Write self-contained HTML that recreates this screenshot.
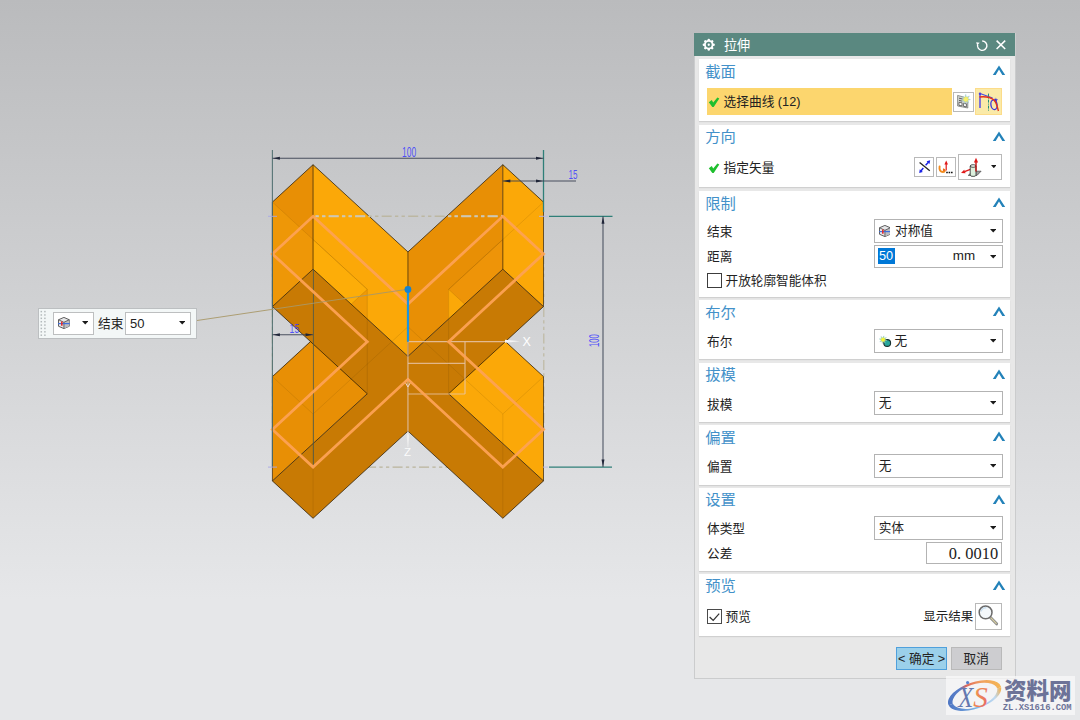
<!DOCTYPE html>
<html lang="zh-CN">
<head>
<meta charset="utf-8">
<title>拉伸</title>
<style>
html,body{margin:0;padding:0;}
body{width:1080px;height:720px;overflow:hidden;position:relative;
  font-family:"Liberation Sans","Noto Sans CJK SC",sans-serif;
  background:linear-gradient(180deg,#babbbd 0px,#e6e7e9 600px,#e6e7e9 720px);}
#scene{position:absolute;left:0;top:0;}
div{box-sizing:content-box;}
</style>
</head>
<body>
<svg id="scene" width="1080" height="720" viewBox="0 0 1080 720">
<defs><clipPath id="clipTopDash"><polygon points="272.4,202.09 313.06,164.7 313.06,269.2 272.4,306.56"/><polygon points="313.06,164.7 407.95,251.95 407.95,356.38 313.06,269.2"/><polygon points="407.95,251.95 502.83,164.7 502.83,269.2 407.95,356.38"/><polygon points="502.83,164.7 543.5,202.09 543.5,306.56 502.83,269.2"/></clipPath></defs>
<line x1="313.065" y1="467.1" x2="502.835" y2="467.1" stroke="#b9b49c" stroke-width="1.4" stroke-dasharray="10 3.3 3.3 3.3 3.3 3.3"/>
<line x1="272.4" y1="253.92" x2="272.4" y2="429.48" stroke="#bdb8a2" stroke-width="1.2" stroke-dasharray="10 3.3 3.3 3.3 3.3 3.3"/>
<line x1="543.8" y1="253.92" x2="543.8" y2="429.48" stroke="#bdb8a2" stroke-width="1.2" stroke-dasharray="10 3.3 3.3 3.3 3.3 3.3"/>
<g shape-rendering="geometricPrecision">
<polygon points="272.4,376.61 367.28,289.35 367.28,393.75 272.4,480.94" fill="#E88F05"/>
<polygon points="448.62,289.35 543.5,376.61 543.5,480.94 448.62,393.75" fill="#FBA808"/>
<polygon points="272.4,202.09 313.06,164.7 313.06,269.2 272.4,306.56" fill="#E88F05"/>
<polygon points="313.06,164.7 407.95,251.95 407.95,356.38 313.06,269.2" fill="#FBA808"/>
<polygon points="407.95,251.95 502.83,164.7 502.83,269.2 407.95,356.38" fill="#E88F05"/>
<polygon points="502.83,164.7 543.5,202.09 543.5,306.56 502.83,269.2" fill="#FBA808"/>
<polygon points="313.06,269.2 407.95,356.38 502.83,269.2 543.5,306.56 448.62,393.75 543.5,480.94 502.83,518.3 407.95,431.12 313.06,518.3 272.4,480.94 367.28,393.75 272.4,306.56" fill="#C87A04"/>
<polygon points="448.62,289.35 464.753,304.187 448.62,319.011" fill="#FBA808"/>
<polygon points="448.62,289.35 502.83,239.494 502.83,269.2 448.62,319.011" fill="#EE9408" />
<polygon points="448.62,289.35 464.753,304.187 448.62,319.011" fill="#FBA808"/>
<polygon points="367.28,289.35 313.06,239.485 313.06,269.2 367.28,319.015" fill="#FDAD08" />
<polygon points="367.28,289.35 351.144,304.19 367.28,319.015" fill="#F09A06"/>
<polygon points="272.4,202.09 313.06,239.485 313.06,269.2 272.4,306.56" fill="#EE9707"/>
<line x1="272.4" y1="202.09" x2="313.06" y2="164.7" stroke="#2a1c05" stroke-width="0.9" stroke-opacity="0.85" />
<line x1="313.06" y1="164.7" x2="407.95" y2="251.95" stroke="#2a1c05" stroke-width="0.9" stroke-opacity="0.85" />
<line x1="407.95" y1="251.95" x2="502.83" y2="164.7" stroke="#2a1c05" stroke-width="0.9" stroke-opacity="0.85" />
<line x1="502.83" y1="164.7" x2="543.5" y2="202.09" stroke="#2a1c05" stroke-width="0.9" stroke-opacity="0.85" />
<line x1="272.4" y1="376.61" x2="310.499" y2="341.571" stroke="#2a1c05" stroke-width="0.9" stroke-opacity="0.85" />
<line x1="543.5" y1="376.61" x2="505.401" y2="341.571" stroke="#2a1c05" stroke-width="0.9" stroke-opacity="0.85" />
<line x1="272.4" y1="202.09" x2="272.4" y2="306.56" stroke="#2a1c05" stroke-width="0.9" stroke-opacity="0.75" />
<line x1="313.06" y1="164.7" x2="313.06" y2="269.2" stroke="#2a1c05" stroke-width="0.9" stroke-opacity="0.75" />
<line x1="407.95" y1="251.95" x2="407.95" y2="356.38" stroke="#2a1c05" stroke-width="0.9" stroke-opacity="0.75" />
<line x1="502.83" y1="164.7" x2="502.83" y2="269.2" stroke="#2a1c05" stroke-width="0.9" stroke-opacity="0.75" />
<line x1="543.5" y1="202.09" x2="543.5" y2="306.56" stroke="#2a1c05" stroke-width="0.9" stroke-opacity="0.75" />
<line x1="272.4" y1="376.61" x2="272.4" y2="480.94" stroke="#2a1c05" stroke-width="0.9" stroke-opacity="0.75" />
<line x1="543.5" y1="376.61" x2="543.5" y2="480.94" stroke="#2a1c05" stroke-width="0.9" stroke-opacity="0.75" />
<polygon points="313.06,269.2 407.95,356.38 502.83,269.2 543.5,306.56 448.62,393.75 543.5,480.94 502.83,518.3 407.95,431.12 313.06,518.3 272.4,480.94 367.28,393.75 272.4,306.56" fill="none" stroke="#2a1c05" stroke-width="0.9" stroke-opacity="0.85" stroke-linejoin="round"/>
<line x1="367.28" y1="289.35" x2="367.28" y2="393.75" stroke="#5a3a00" stroke-width="0.7" stroke-opacity="0.22" />
<line x1="448.62" y1="289.35" x2="448.62" y2="393.75" stroke="#5a3a00" stroke-width="0.7" stroke-opacity="0.22" />
<line x1="448.62" y1="289.35" x2="502.83" y2="239.494" stroke="#5a3a00" stroke-width="0.7" stroke-opacity="0.22" />
<line x1="367.28" y1="289.35" x2="313.06" y2="239.485" stroke="#5a3a00" stroke-width="0.7" stroke-opacity="0.22" />
<line x1="448.62" y1="289.35" x2="464.753" y2="304.187" stroke="#5a3a00" stroke-width="0.7" stroke-opacity="0.22" />
<line x1="367.28" y1="289.35" x2="351.144" y2="304.19" stroke="#5a3a00" stroke-width="0.7" stroke-opacity="0.22" />
<line x1="272.4" y1="376.61" x2="313.06" y2="414" stroke="#5a3a00" stroke-width="0.7" stroke-opacity="0.2" />
<line x1="313.06" y1="414" x2="407.95" y2="326.75" stroke="#5a3a00" stroke-width="0.7" stroke-opacity="0.2" />
<line x1="407.95" y1="326.75" x2="502.83" y2="414" stroke="#5a3a00" stroke-width="0.7" stroke-opacity="0.2" />
<line x1="502.83" y1="414" x2="543.5" y2="376.61" stroke="#5a3a00" stroke-width="0.7" stroke-opacity="0.2" />
<line x1="313.06" y1="414" x2="313.06" y2="518.3" stroke="#5a3a00" stroke-width="0.7" stroke-opacity="0.18" />
<line x1="502.83" y1="414" x2="502.83" y2="518.3" stroke="#5a3a00" stroke-width="0.7" stroke-opacity="0.18" />
<line x1="407.95" y1="326.75" x2="407.95" y2="431.12" stroke="#5a3a00" stroke-width="0.7" stroke-opacity="0.18" />
<line x1="272.4" y1="202.09" x2="367.28" y2="289.35" stroke="#5a3a00" stroke-width="0.7" stroke-opacity="0.18" />
<line x1="543.5" y1="202.09" x2="448.62" y2="289.35" stroke="#5a3a00" stroke-width="0.7" stroke-opacity="0.18" />
</g>
<line x1="313.065" y1="216.3" x2="502.835" y2="216.3" stroke="#bcb7a2" stroke-width="1.6" stroke-opacity="1" stroke-dasharray="10 3.3 3.3 3.3 3.3 3.3" stroke-dashoffset="10.9"/>
<g clip-path="url(#clipTopDash)">
<line x1="313.065" y1="216.3" x2="502.835" y2="216.3" stroke="#d0c8b2" stroke-width="2" stroke-opacity="1" stroke-dasharray="10 3.3 3.3 3.3 3.3 3.3" stroke-dashoffset="10.9"/>
</g>
<line x1="407.95" y1="341.7" x2="505" y2="341.7" stroke="#e8c6aa" stroke-width="1.2" stroke-opacity="0.85" />
<line x1="407.95" y1="341.7" x2="407.95" y2="432" stroke="#e8c6aa" stroke-width="1.2" stroke-opacity="0.85" />
<line x1="465" y1="341.7" x2="465" y2="394" stroke="#e8c6aa" stroke-width="1.2" stroke-opacity="0.8" />
<line x1="407.95" y1="363.3" x2="465" y2="363.3" stroke="#e8c6aa" stroke-width="1.2" stroke-opacity="0.8" />
<line x1="407.95" y1="394" x2="465" y2="394" stroke="#e8c6aa" stroke-width="1.2" stroke-opacity="0.8" />
<polygon points="505,339.8 520,341.3 505,342.8" fill="#f4f4f4"/>
<polygon points="406.7,436 407.9,432 409.2,436 408.3,447 407.6,447" fill="#f0f0f0" fill-opacity="0.9"/>
<text x="522.5" y="346.3" font-family="Liberation Sans, sans-serif" font-size="12.5" fill="#ffffff">X</text>
<text x="404" y="456" font-family="Liberation Sans, sans-serif" font-size="11.5" fill="#ffffff" fill-opacity="0.9">Z</text>
<path d="M405.3 381.5 L407.9 378.4 L410.5 381.5 M405.3 382.5 L407.9 387 L410.5 382.5" fill="none" stroke="#f1d9cf" stroke-width="1"/>
<line x1="313.415" y1="269.2" x2="313.415" y2="467.1" stroke="#3d5557" stroke-width="1" stroke-opacity="0.75" />
<polygon points="313.06,216.3 407.95,304.08 502.83,216.3 543.5,253.92 448.62,341.7 543.5,429.48 502.83,467.1 407.95,379.32 313.06,467.1 272.4,429.48 367.28,341.7 272.4,253.92" fill="none" stroke="#FDA254" stroke-width="2.8" stroke-linejoin="miter" stroke-opacity="0.95"/>
<line x1="272.4" y1="150" x2="272.4" y2="467.1" stroke="#4a6a6c" stroke-width="1.1" stroke-opacity="0.9" />
<line x1="543.5" y1="150" x2="543.5" y2="212" stroke="#2f7f78" stroke-width="1.3" stroke-opacity="1" />
<line x1="549" y1="216.3" x2="612.5" y2="216.3" stroke="#2f7f78" stroke-width="1.3" stroke-opacity="1" />
<line x1="549" y1="467.1" x2="612" y2="467.1" stroke="#2f7f78" stroke-width="1.3" stroke-opacity="1" />
<line x1="268" y1="216.3" x2="277" y2="216.3" stroke="#a9a8e6" stroke-width="1" stroke-opacity="0.9" />
<line x1="539" y1="216.3" x2="548" y2="216.3" stroke="#b9b8e8" stroke-width="1" stroke-opacity="0.9" />
<line x1="268" y1="467.1" x2="277" y2="467.1" stroke="#a9a8e6" stroke-width="1" stroke-opacity="0.9" />
<line x1="543" y1="467.1" x2="548" y2="467.1" stroke="#b9b8e8" stroke-width="1" stroke-opacity="0.9" />
<line x1="272.4" y1="158.3" x2="543.5" y2="158.3" stroke="#3a4152" stroke-width="1.1" stroke-opacity="0.9" />
<polygon points="272.9,158.3 279.9,156.8 279.9,159.8" fill="#1f2538"/>
<polygon points="543,158.3 536,156.8 536,159.8" fill="#1f2538"/>
<line x1="502.835" y1="181" x2="576" y2="181" stroke="#3a4152" stroke-width="1.1" stroke-opacity="0.9" />
<polygon points="503.335,181 510.335,179.5 510.335,182.5" fill="#1f2538"/>
<polygon points="543,181 536,179.5 536,182.5" fill="#1f2538"/>
<line x1="272.4" y1="334.7" x2="313.065" y2="334.7" stroke="#3a4152" stroke-width="1.1" stroke-opacity="0.9" />
<polygon points="272.9,334.7 279.9,333.2 279.9,336.2" fill="#1f2538"/>
<polygon points="312.565,334.7 305.565,333.2 305.565,336.2" fill="#1f2538"/>
<line x1="603" y1="216.3" x2="603" y2="467.1" stroke="#3a4152" stroke-width="1.2" stroke-opacity="0.8" />
<polygon points="603,216.8 601.5,223.8 604.5,223.8" fill="#1f2538"/>
<polygon points="603,466.6 601.5,459.6 604.5,459.6" fill="#1f2538"/>
<text x="402" y="156.8" font-size="14.2" textLength="14.2" lengthAdjust="spacingAndGlyphs" font-family="Liberation Sans, sans-serif" fill="#3a3aff" fill-opacity="0.85">100</text>
<text x="568.6" y="178.8" font-size="13" textLength="9" lengthAdjust="spacingAndGlyphs" font-family="Liberation Sans, sans-serif" fill="#3a3aff" fill-opacity="0.85">15</text>
<text x="289.6" y="332.6" font-size="13" textLength="9.6" lengthAdjust="spacingAndGlyphs" font-family="Liberation Sans, sans-serif" fill="#3a3aff" fill-opacity="0.85">15</text>
<text transform="translate(598.6,347) rotate(-90)" font-size="15" textLength="12.8" lengthAdjust="spacingAndGlyphs" font-family="Liberation Sans, sans-serif" fill="#3a3aff" fill-opacity="0.85">100</text>
<line x1="197" y1="320.5" x2="407.95" y2="289.2" stroke="#a89868" stroke-width="1" stroke-opacity="0.9" />
<line x1="407.95" y1="291" x2="407.95" y2="341.7" stroke="#1d95dd" stroke-width="2.2" stroke-opacity="1" />
<circle cx="407.95" cy="289.4" r="3.4" fill="#1583d2"/>
</svg>
<div style="position:absolute;left:694px;top:33px;width:319.5px;height:645px;background:#e8e8e8;border:1px solid #cbcccd;border-top:none;"></div>
<div style="position:absolute;left:694px;top:33px;width:321px;height:22.5px;background:#5a8880;"></div>
<svg style="position:absolute;left:702px;top:38px" width="13.5" height="13.5" viewBox="0 0 13.5 13.5"><g stroke="#fff" stroke-width="2.5" stroke-linecap="round"><line x1="6.75" y1="1.9" x2="6.75" y2="11.6"/><line x1="1.9" y1="6.75" x2="11.6" y2="6.75"/><line x1="3.3" y1="3.3" x2="10.2" y2="10.2"/><line x1="10.2" y1="3.3" x2="3.3" y2="10.2"/></g><circle cx="6.75" cy="6.75" r="4.7" fill="#fff"/><circle cx="6.75" cy="6.75" r="2.9" fill="#5a8880"/><circle cx="6.75" cy="6.75" r="1.15" fill="#fff"/></svg>
<div style="position:absolute;left:724px;top:35px;font-size:13.1px;line-height:22px;color:#fff;white-space:nowrap;">拉伸</div>
<svg style="position:absolute;left:975.5px;top:38.5px" width="13" height="13" viewBox="0 0 13 13"><path d="M6.20 2.00 A4.7 4.7 0 1 1 1.66 5.48" fill="none" stroke="#fff" stroke-width="1.4"/><path d="M0.16 3.28 l3.6 0.4 l-2.6 2.6 Z" fill="#fff"/></svg>
<svg style="position:absolute;left:996.3px;top:40.4px" width="9.8" height="9.6" viewBox="0 0 9.8 9.6"><path d="M0.6 0.6 L9.2 9 M9.2 0.6 L0.6 9" stroke="#fff" stroke-width="1.5" fill="none"/></svg>
<div style="position:absolute;left:699.3px;top:59px;width:310.7px;height:62.3px;background:#fff;box-shadow:0 1px 1px rgba(0,0,0,0.10);"></div>
<div style="position:absolute;left:705.2px;top:62px;font-size:15.3px;line-height:20px;color:#4391c9;white-space:nowrap;">截面</div>
<svg style="position:absolute;left:990.7px;top:63px" width="16" height="14" viewBox="0 0 16 14"><polygon points="1.8,11.9 8,2.5 14.2,11.9 11.3,11.9 8,6.6 4.7,11.9" fill="#2382b9"/></svg>
<div style="position:absolute;left:707px;top:88px;width:245px;height:26.7px;background:#fcd66e;"></div>
<svg style="position:absolute;left:708px;top:95.5px" width="12" height="12" viewBox="0 0 12 12"><path d="M0.8 6.2 L3.8 4.0 L5.2 6.6 L9.4 1.4 L11.3 2.5 L5.7 11 L4.3 11 Z" fill="#1fbf2e"/></svg>
<div style="position:absolute;left:723.6px;top:92px;font-size:12.7px;line-height:20px;color:#222;white-space:nowrap;">选择曲线 (12)</div>
<div style="position:absolute;left:953.3px;top:92.2px;width:18.5px;height:17.5px;background:#fff;border:1px solid #b9b9b9;"></div>
<svg style="position:absolute;left:956px;top:94.2px" width="15" height="15" viewBox="0 0 15 15"><path d="M1.6 1.4 L7.6 3 L11.8 7 L11.8 14 L1.6 12 Z" fill="#cfd3cf" stroke="#6b6f6b" stroke-width="0.7"/><path d="M3 4.2 L6.6 5 M3 6.4 L6.2 7.1" stroke="#555" stroke-width="0.9"/><rect x="3" y="8.4" width="3" height="3" fill="#fff" stroke="#444" stroke-width="0.7" transform="skewY(10) translate(0,-0.6)"/><rect x="7.6" y="9.4" width="2.8" height="3" fill="#fff" stroke="#444" stroke-width="0.7" transform="skewY(10) translate(0,-1.4)"/><path d="M9.7 0.4 L10.5 3.2 L13.4 2 L11.8 4.6 L14.4 5.6 L11.7 6.4 L12.6 9 L10.2 7.4 L8.6 9.6 L8.3 6.8 L5.6 6.9 L7.7 5.1 L6.2 2.9 L8.8 3.4 Z" fill="#f3ea55" stroke="#8fc4e8" stroke-width="0.5"/><circle cx="9.8" cy="5.2" r="2" fill="#f8f06a"/></svg>
<div style="position:absolute;left:975.3px;top:88px;width:25px;height:24.7px;background:#faeaa8;border:1px solid #fcdc8a;"></div>
<svg style="position:absolute;left:977px;top:89.5px" width="24" height="24" viewBox="0 0 24 24"><path d="M3 3.3 L3 18.1" stroke="#6a5fe0" stroke-width="1.7" fill="none"/><path d="M3 3.6 L15.6 8" stroke="#4a4ae0" stroke-width="1.1" fill="none"/><path d="M11.5 3.6 L11.5 20.8" stroke="#1f8f78" stroke-width="1" stroke-dasharray="3 1 1 1" fill="none"/><ellipse cx="17" cy="14.7" rx="3.1" ry="4.9" transform="rotate(-8 17 14.7)" fill="none" stroke="#3535dc" stroke-width="1.3"/><path d="M18.9 7.6 L19.5 9.2 L21.1 9.6 L19.7 10.5 L19.9 12.1 L18.7 11 L17.2 11.5 L17.9 10.1 L17 8.8 L18.5 9 Z" fill="#3535dc"/><path d="M2.4 7 C8 6.4 13 6.8 17 10 C19.5 12.5 20.3 16.5 21.4 21" fill="none" stroke="#e2321a" stroke-width="1.4"/><circle cx="3" cy="3.7" r="1.25" fill="#4a3fe0"/></svg>
<div style="position:absolute;left:699.3px;top:124.7px;width:310.7px;height:62.5px;background:#fff;box-shadow:0 1px 1px rgba(0,0,0,0.10);"></div>
<div style="position:absolute;left:705.2px;top:127px;font-size:15.3px;line-height:20px;color:#4391c9;white-space:nowrap;">方向</div>
<svg style="position:absolute;left:990.7px;top:128.7px" width="16" height="14" viewBox="0 0 16 14"><polygon points="1.8,11.9 8,2.5 14.2,11.9 11.3,11.9 8,6.6 4.7,11.9" fill="#2382b9"/></svg>
<svg style="position:absolute;left:708px;top:161.6px" width="12" height="12" viewBox="0 0 12 12"><path d="M0.8 6.2 L3.8 4.0 L5.2 6.6 L9.4 1.4 L11.3 2.5 L5.7 11 L4.3 11 Z" fill="#1fbf2e"/></svg>
<div style="position:absolute;left:723.6px;top:158px;font-size:12.7px;line-height:20px;color:#222;white-space:nowrap;">指定矢量</div>
<div style="position:absolute;left:914.2px;top:157px;width:17.7px;height:17.7px;background:#fff;border:1px solid #b9b9b9;"></div>
<svg style="position:absolute;left:915.5px;top:158.3px" width="17" height="17" viewBox="0 0 17 17"><path d="M3.6 4.5 L13.8 12.8" stroke="#222" stroke-width="1.3"/><path d="M9.6 7.3 L12.4 4.2" stroke="#1a22e6" stroke-width="1.5"/><path d="M14.2 2.2 L13.5 6 L10.6 3.3 Z" fill="#1a22e6"/><path d="M7.3 10.1 L4.9 12.9" stroke="#1a22e6" stroke-width="1.5"/><path d="M3.2 15 L3.8 11.3 L6.8 13.9 Z" fill="#1a22e6"/></svg>
<div style="position:absolute;left:936px;top:157px;width:17.8px;height:17.7px;background:#fff;border:1px solid #b9b9b9;"></div>
<svg style="position:absolute;left:937.2px;top:158.3px" width="17" height="17" viewBox="0 0 17 17"><path d="M9.2 12.6 L9.2 5.5" stroke="#e01818" stroke-width="1.2"/><path d="M9.2 2.4 L11 6.6 L7.4 6.6 Z" fill="#e01818"/><path d="M2.6 8.4 C2 11.8 3.4 14 6 14 C8 14 8.4 12.2 6.8 11.6" fill="none" stroke="#f28a1c" stroke-width="1.9" stroke-linecap="round"/><path d="M6.6 10.2 L8.6 12.6 L5.8 13 Z" fill="#e8641a"/><path d="M9.2 14.4 L15.8 14.4" stroke="#111" stroke-width="1.5" stroke-dasharray="1.6 0.8"/></svg>
<div style="position:absolute;left:958px;top:153.8px;width:42.2px;height:24.5px;background:#fff;border:1px solid #b9b9b9;"></div>
<svg style="position:absolute;left:960px;top:155.5px" width="26" height="22" viewBox="0 0 26 22"><path d="M8.2 19.4 L12.8 15.2 L21.1 15.2 L17 19.4 Z" fill="#9c9c9c" stroke="#444" stroke-width="0.7"/><path d="M12.8 12.4 L4.6 15.6" stroke="#e01818" stroke-width="1.3"/><path d="M1 17 L4.2 13.8 L5.6 17.2 Z" fill="#e01818"/><path d="M10.2 10 L10.2 19.2 A2.9 1.2 0 0 0 16 19.2 L16 10 Z" fill="#dcefdc" stroke="#2a2a2a" stroke-width="0.8"/><ellipse cx="13.1" cy="10" rx="2.9" ry="1.3" fill="#f2f8f2" stroke="#2a2a2a" stroke-width="0.8"/><path d="M16 15.5 L16 6" stroke="#c01010" stroke-width="1.4"/><path d="M16 1.8 L18.1 6.6 L13.9 6.6 Z" fill="#e01818"/></svg>
<svg style="position:absolute;left:990.5px;top:165.2px" width="5.6" height="3.2" viewBox="0 0 5.6 3.2"><polygon points="0,0 5.6,0 2.8,3.2" fill="#1a1a1a"/></svg>
<div style="position:absolute;left:699.3px;top:190.8px;width:310.7px;height:106.7px;background:#fff;box-shadow:0 1px 1px rgba(0,0,0,0.10);"></div>
<div style="position:absolute;left:705.2px;top:194px;font-size:15.3px;line-height:20px;color:#4391c9;white-space:nowrap;">限制</div>
<svg style="position:absolute;left:990.7px;top:194.8px" width="16" height="14" viewBox="0 0 16 14"><polygon points="1.8,11.9 8,2.5 14.2,11.9 11.3,11.9 8,6.6 4.7,11.9" fill="#2382b9"/></svg>
<div style="position:absolute;left:707px;top:222px;font-size:12.7px;line-height:20px;color:#222;white-space:nowrap;">结束</div>
<div style="position:absolute;left:707px;top:247px;font-size:12.7px;line-height:20px;color:#222;white-space:nowrap;">距离</div>
<div style="position:absolute;left:874.2px;top:219.2px;width:126.6px;height:22px;background:#fff;border:1px solid #b3b3b3;"></div>
<div style="position:absolute;left:895px;top:221px;font-size:12.7px;line-height:20px;color:#222;white-space:nowrap;">对称值</div>
<svg style="position:absolute;left:990px;top:229.4px" width="6.4" height="3.6" viewBox="0 0 6.4 3.6"><polygon points="0,0 6.4,0 3.2,3.6" fill="#1a1a1a"/></svg>
<svg style="position:absolute;left:878.7px;top:225px" width="11.8" height="11.8" viewBox="0 0 12 12"><path d="M6 0.4 L11.5 2.8 L11.5 9.4 L6 11.8 L0.5 9.4 L0.5 2.8 Z" fill="#e6e6e8" stroke="#4a4a4a" stroke-width="0.9" stroke-linejoin="round"/><path d="M6 5.4 L11.5 2.8 L11.5 9.4 L6 11.8 Z" fill="#bdbdc0"/><path d="M0.5 2.8 L6 5.4 L11.5 2.8 M6 5.4 L6 11.8" fill="none" stroke="#4a4a4a" stroke-width="0.8"/><path d="M0.1 6.7 L11.9 6.7" fill="none" stroke="#3d6fe0" stroke-width="1.2"/><path d="M3.9 4.5 L3.9 9" stroke="#e02a2a" stroke-width="1.6"/></svg>
<div style="position:absolute;left:874.2px;top:245px;width:126.6px;height:21.2px;background:#fff;border:1px solid #b3b3b3;"></div>
<div style="position:absolute;left:878px;top:247.5px;width:16.5px;height:16.8px;background:#0078d7;"></div>
<div style="position:absolute;left:879px;top:246px;font-size:12.7px;line-height:20px;color:#fff;white-space:nowrap;">50</div>
<div style="position:absolute;left:952.8px;top:246px;font-size:13.4px;line-height:20px;color:#222;white-space:nowrap;">mm</div>
<svg style="position:absolute;left:990px;top:255px" width="6.4" height="3.6" viewBox="0 0 6.4 3.6"><polygon points="0,0 6.4,0 3.2,3.6" fill="#1a1a1a"/></svg>
<div style="position:absolute;left:707px;top:273px;width:13px;height:13px;background:#fff;border:1px solid #3c3c3c;"></div>
<div style="position:absolute;left:725.5px;top:271px;font-size:12.65px;line-height:20px;color:#222;white-space:nowrap;">开放轮廓智能体积</div>
<div style="position:absolute;left:699.3px;top:300.3px;width:310.7px;height:58.9px;background:#fff;box-shadow:0 1px 1px rgba(0,0,0,0.10);"></div>
<div style="position:absolute;left:705.2px;top:303px;font-size:15.3px;line-height:20px;color:#4391c9;white-space:nowrap;">布尔</div>
<svg style="position:absolute;left:990.7px;top:304.3px" width="16" height="14" viewBox="0 0 16 14"><polygon points="1.8,11.9 8,2.5 14.2,11.9 11.3,11.9 8,6.6 4.7,11.9" fill="#2382b9"/></svg>
<div style="position:absolute;left:707px;top:332px;font-size:12.7px;line-height:20px;color:#222;white-space:nowrap;">布尔</div>
<div style="position:absolute;left:874.2px;top:329.2px;width:126.6px;height:22px;background:#fff;border:1px solid #b3b3b3;"></div>
<div style="position:absolute;left:894.5px;top:331px;font-size:12.7px;line-height:20px;color:#222;white-space:nowrap;">无</div>
<svg style="position:absolute;left:990px;top:339.4px" width="6.4" height="3.6" viewBox="0 0 6.4 3.6"><polygon points="0,0 6.4,0 3.2,3.6" fill="#1a1a1a"/></svg>
<svg style="position:absolute;left:878px;top:332.5px" width="15" height="15" viewBox="0 0 15 15"><circle cx="9.2" cy="10" r="3.4" fill="#27a79c" stroke="#17302e" stroke-width="1.1"/><polygon points="5.87,2.88 6.05,5.29 8.35,4.55 6.77,6.37 8.92,7.47 6.51,7.65 7.25,9.95 5.43,8.37 4.33,10.52 4.15,8.11 1.85,8.85 3.43,7.03 1.28,5.93 3.69,5.75 2.95,3.45 4.77,5.03" fill="#eef02e" stroke="#7fc0d8" stroke-width="0.45"/><circle cx="5.1" cy="6.7" r="1.7" fill="#f6f63a"/></svg>
<div style="position:absolute;left:699.3px;top:362.5px;width:310.7px;height:59px;background:#fff;box-shadow:0 1px 1px rgba(0,0,0,0.10);"></div>
<div style="position:absolute;left:705.2px;top:365px;font-size:15.3px;line-height:20px;color:#4391c9;white-space:nowrap;">拔模</div>
<svg style="position:absolute;left:990.7px;top:366.5px" width="16" height="14" viewBox="0 0 16 14"><polygon points="1.8,11.9 8,2.5 14.2,11.9 11.3,11.9 8,6.6 4.7,11.9" fill="#2382b9"/></svg>
<div style="position:absolute;left:707px;top:395px;font-size:12.7px;line-height:20px;color:#222;white-space:nowrap;">拔模</div>
<div style="position:absolute;left:874.2px;top:391.2px;width:126.6px;height:22px;background:#fff;border:1px solid #b3b3b3;"></div>
<div style="position:absolute;left:878.7px;top:393px;font-size:12.7px;line-height:20px;color:#222;white-space:nowrap;">无</div>
<svg style="position:absolute;left:990px;top:401.4px" width="6.4" height="3.6" viewBox="0 0 6.4 3.6"><polygon points="0,0 6.4,0 3.2,3.6" fill="#1a1a1a"/></svg>
<div style="position:absolute;left:699.3px;top:425px;width:310.7px;height:59.5px;background:#fff;box-shadow:0 1px 1px rgba(0,0,0,0.10);"></div>
<div style="position:absolute;left:705.2px;top:428px;font-size:15.3px;line-height:20px;color:#4391c9;white-space:nowrap;">偏置</div>
<svg style="position:absolute;left:990.7px;top:429px" width="16" height="14" viewBox="0 0 16 14"><polygon points="1.8,11.9 8,2.5 14.2,11.9 11.3,11.9 8,6.6 4.7,11.9" fill="#2382b9"/></svg>
<div style="position:absolute;left:707px;top:457px;font-size:12.7px;line-height:20px;color:#222;white-space:nowrap;">偏置</div>
<div style="position:absolute;left:874.2px;top:454.2px;width:126.6px;height:22px;background:#fff;border:1px solid #b3b3b3;"></div>
<div style="position:absolute;left:878.7px;top:456px;font-size:12.7px;line-height:20px;color:#222;white-space:nowrap;">无</div>
<svg style="position:absolute;left:990px;top:464.4px" width="6.4" height="3.6" viewBox="0 0 6.4 3.6"><polygon points="0,0 6.4,0 3.2,3.6" fill="#1a1a1a"/></svg>
<div style="position:absolute;left:699.3px;top:487.5px;width:310.7px;height:83.3px;background:#fff;box-shadow:0 1px 1px rgba(0,0,0,0.10);"></div>
<div style="position:absolute;left:705.2px;top:490px;font-size:15.3px;line-height:20px;color:#4391c9;white-space:nowrap;">设置</div>
<svg style="position:absolute;left:990.7px;top:491.5px" width="16" height="14" viewBox="0 0 16 14"><polygon points="1.8,11.9 8,2.5 14.2,11.9 11.3,11.9 8,6.6 4.7,11.9" fill="#2382b9"/></svg>
<div style="position:absolute;left:707px;top:519px;font-size:12.7px;line-height:20px;color:#222;white-space:nowrap;">体类型</div>
<div style="position:absolute;left:707px;top:544px;font-size:12.7px;line-height:20px;color:#222;white-space:nowrap;">公差</div>
<div style="position:absolute;left:874.2px;top:516.2px;width:126.6px;height:21.4px;background:#fff;border:1px solid #b3b3b3;"></div>
<div style="position:absolute;left:878.7px;top:518px;font-size:12.7px;line-height:20px;color:#222;white-space:nowrap;">实体</div>
<svg style="position:absolute;left:990px;top:526.1px" width="6.4" height="3.6" viewBox="0 0 6.4 3.6"><polygon points="0,0 6.4,0 3.2,3.6" fill="#1a1a1a"/></svg>
<div style="position:absolute;left:926px;top:542px;width:74.3px;height:20.2px;background:#fff;border:1px solid #b3b3b3;"></div>
<div style="position:absolute;left:926.7px;top:542.5px;width:71.5px;height:21px;text-align:right;font-family:'Liberation Serif',serif;font-size:16.4px;letter-spacing:0.05px;line-height:21px;color:#222;white-space:pre;">0. 0010</div>
<div style="position:absolute;left:699.3px;top:573.7px;width:310.7px;height:62.5px;background:#fff;box-shadow:0 1px 1px rgba(0,0,0,0.10);"></div>
<div style="position:absolute;left:705.2px;top:576px;font-size:15.3px;line-height:20px;color:#4391c9;white-space:nowrap;">预览</div>
<svg style="position:absolute;left:990.7px;top:577.7px" width="16" height="14" viewBox="0 0 16 14"><polygon points="1.8,11.9 8,2.5 14.2,11.9 11.3,11.9 8,6.6 4.7,11.9" fill="#2382b9"/></svg>
<div style="position:absolute;left:707px;top:608.6px;width:13px;height:13px;background:#fff;border:1px solid #4a4a4a;"></div>
<svg style="position:absolute;left:708px;top:609.6px" width="13" height="13" viewBox="0 0 13 13"><path d="M1.6 7 L5.2 10.4 L11.2 3.6" fill="none" stroke="#333" stroke-width="1.25"/></svg>
<div style="position:absolute;left:725.5px;top:607px;font-size:12.7px;line-height:20px;color:#222;white-space:nowrap;">预览</div>
<div style="position:absolute;left:923.3px;top:607px;font-size:12.5px;line-height:20px;color:#222;white-space:nowrap;">显示结果</div>
<div style="position:absolute;left:975.3px;top:602.8px;width:25px;height:24.8px;background:#fff;border:1px solid #b9b9b9;"></div>
<svg style="position:absolute;left:976.2px;top:603.3px" width="24" height="24" viewBox="0 0 24 24"><path d="M14.2 14.2 L20.6 20.8" stroke="#8a8a8a" stroke-width="3" stroke-linecap="round"/><path d="M14.6 14.6 L20.2 20.4" stroke="#d9d0a0" stroke-width="1.2" stroke-linecap="round"/><circle cx="9.6" cy="9.4" r="6.4" fill="#f4f8fb" stroke="#6b6b6b" stroke-width="1.5"/><path d="M5.2 8.4 A4.6 4.6 0 0 1 10.4 4.8" fill="none" stroke="#c9dff0" stroke-width="1.4"/></svg>
<div style="position:absolute;left:896.3px;top:646.5px;width:48.7px;height:21.4px;background:#9bd0ea;border:1px solid #4fa0dc;text-align:center;font-size:12.7px;line-height:23px;color:#222;white-space:nowrap;">&lt; 确定 &gt;</div>
<div style="position:absolute;left:951px;top:646.5px;width:48.6px;height:21.4px;background:#cdcdd0;border:1px solid #b9b9b9;text-align:center;font-size:12.7px;line-height:23px;color:#222;">取消</div>
<div style="position:absolute;left:38px;top:308px;width:156.6px;height:28.5px;background:#f3f7f7;border:1px solid #bcbfc1;"></div>
<svg style="position:absolute;left:38px;top:308px" width="12" height="31" viewBox="0 0 12 31"><rect x="2.55" y="2.85" width="1.5" height="1.5" fill="#b4babc"/><rect x="6.15" y="2.85" width="1.5" height="1.5" fill="#b4babc"/><rect x="2.55" y="6.22" width="1.5" height="1.5" fill="#b4babc"/><rect x="6.15" y="6.22" width="1.5" height="1.5" fill="#b4babc"/><rect x="2.55" y="9.59" width="1.5" height="1.5" fill="#b4babc"/><rect x="6.15" y="9.59" width="1.5" height="1.5" fill="#b4babc"/><rect x="2.55" y="12.96" width="1.5" height="1.5" fill="#b4babc"/><rect x="6.15" y="12.96" width="1.5" height="1.5" fill="#b4babc"/><rect x="2.55" y="16.33" width="1.5" height="1.5" fill="#b4babc"/><rect x="6.15" y="16.33" width="1.5" height="1.5" fill="#b4babc"/><rect x="2.55" y="19.7" width="1.5" height="1.5" fill="#b4babc"/><rect x="6.15" y="19.7" width="1.5" height="1.5" fill="#b4babc"/><rect x="2.55" y="23.07" width="1.5" height="1.5" fill="#b4babc"/><rect x="6.15" y="23.07" width="1.5" height="1.5" fill="#b4babc"/><rect x="2.55" y="26.44" width="1.5" height="1.5" fill="#b4babc"/><rect x="6.15" y="26.44" width="1.5" height="1.5" fill="#b4babc"/></svg>
<div style="position:absolute;left:53.3px;top:311.7px;width:39.1px;height:20.9px;background:#fff;border:1px solid #bdbfc0;"></div>
<svg style="position:absolute;left:57.8px;top:317px" width="11.8" height="11.8" viewBox="0 0 12 12"><path d="M6 0.4 L11.5 2.8 L11.5 9.4 L6 11.8 L0.5 9.4 L0.5 2.8 Z" fill="#e6e6e8" stroke="#4a4a4a" stroke-width="0.9" stroke-linejoin="round"/><path d="M6 5.4 L11.5 2.8 L11.5 9.4 L6 11.8 Z" fill="#bdbdc0"/><path d="M0.5 2.8 L6 5.4 L11.5 2.8 M6 5.4 L6 11.8" fill="none" stroke="#4a4a4a" stroke-width="0.8"/><path d="M0.1 6.7 L11.9 6.7" fill="none" stroke="#3d6fe0" stroke-width="1.2"/><path d="M3.9 4.5 L3.9 9" stroke="#e02a2a" stroke-width="1.6"/></svg>
<svg style="position:absolute;left:81.6px;top:321.2px" width="6.4" height="3.6" viewBox="0 0 6.4 3.6"><polygon points="0,0 6.4,0 3.2,3.6" fill="#1a1a1a"/></svg>
<div style="position:absolute;left:98px;top:314px;font-size:12.7px;line-height:20px;color:#222;white-space:nowrap;">结束</div>
<div style="position:absolute;left:125px;top:311.7px;width:64px;height:20.9px;background:#fff;border:1px solid #bdbfc0;"></div>
<div style="position:absolute;left:130px;top:314px;font-size:13px;line-height:20px;color:#222;white-space:nowrap;">50</div>
<svg style="position:absolute;left:178.8px;top:321.2px" width="6.4" height="3.6" viewBox="0 0 6.4 3.6"><polygon points="0,0 6.4,0 3.2,3.6" fill="#1a1a1a"/></svg>
<div style="position:absolute;left:946px;top:676px;width:129px;height:39px;background:rgba(250,250,250,0.72);"></div>
<svg style="position:absolute;left:946px;top:676px" width="129" height="39" viewBox="0 0 129 39"><defs><linearGradient id="wg1" gradientUnits="userSpaceOnUse" x1="2" y1="0" x2="55" y2="0"><stop offset="0" stop-color="#4f77c4"/><stop offset="0.28" stop-color="#5b7fc8"/><stop offset="0.42" stop-color="#e0685a"/><stop offset="0.7" stop-color="#f0a060"/><stop offset="1" stop-color="#f4b455"/></linearGradient><linearGradient id="wg3" gradientUnits="userSpaceOnUse" x1="2" y1="0" x2="55" y2="0"><stop offset="0" stop-color="#4f77c4"/><stop offset="0.45" stop-color="#7db4e6"/><stop offset="0.85" stop-color="#a8cdee" stop-opacity="0.7"/><stop offset="1" stop-color="#f4b455"/></linearGradient><linearGradient id="wg2" x1="0" y1="0" x2="1" y2="1"><stop offset="0" stop-color="#f2a545"/><stop offset="1" stop-color="#e6606e"/></linearGradient><clipPath id="wcu"><rect x="-10" y="-40" width="80" height="40.8"/></clipPath><clipPath id="wcl"><rect x="-10" y="0.8" width="80" height="40"/></clipPath></defs><g transform="translate(28.6 19.5) rotate(-19)"><path clip-path="url(#wcu)" fill-rule="evenodd" fill="url(#wg1)" transform="translate(-28.6 0)" d="M0.8 0 a27.8 13.2 0 1 0 55.6 0 a27.8 13.2 0 1 0 -55.6 0 Z M5.2 1.2 a23.6 12.2 0 1 0 47.2 0 a23.6 12.2 0 1 0 -47.2 0 Z"/><path clip-path="url(#wcl)" fill-rule="evenodd" fill="url(#wg3)" transform="translate(-28.6 0)" d="M0.8 0 a27.8 13.2 0 1 0 55.6 0 a27.8 13.2 0 1 0 -55.6 0 Z M5.2 -0.6 a23.6 12.4 0 1 0 47.2 0 a23.6 12.4 0 1 0 -47.2 0 Z"/></g><circle cx="21.6" cy="6.6" r="1.6" fill="#5a82cc"/><text x="12.2" y="30.8" font-family="Liberation Serif, serif" font-style="italic" font-size="29.5" fill="#6478b0" textLength="15" lengthAdjust="spacingAndGlyphs">X</text><text x="27.2" y="30.8" font-family="Liberation Serif, serif" font-style="italic" font-size="29.5" fill="url(#wg2)" textLength="14.5" lengthAdjust="spacingAndGlyphs">S</text><text x="58" y="22.6" font-family="Liberation Sans, Noto Sans CJK SC, sans-serif" font-weight="900" font-size="22.6" fill="#6d7398" textLength="67.6" lengthAdjust="spacingAndGlyphs">资料网</text><text x="56.8" y="33.5" font-family="Liberation Mono, monospace" font-weight="bold" font-size="8.9" fill="#6d7398" textLength="68.8" lengthAdjust="spacingAndGlyphs">ZL.XS1616.COM</text></svg>
</body>
</html>
